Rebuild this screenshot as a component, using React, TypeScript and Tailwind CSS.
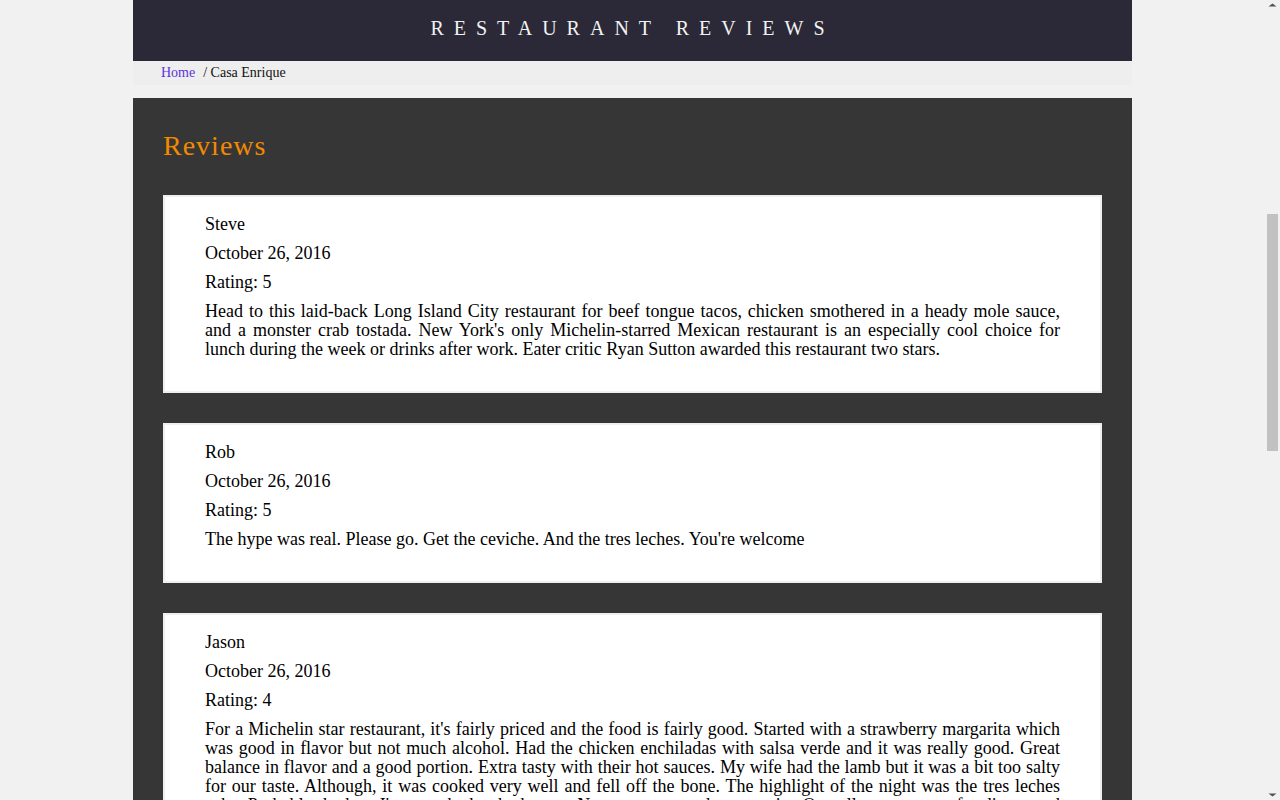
const reviews = [
  {
    name: "Steve",
    date: "October 26, 2016",
    rating: 5,
    comments:
      "Head to this laid-back Long Island City restaurant for beef tongue tacos, chicken smothered in a heady mole sauce, and a monster crab tostada. New York's only Michelin-starred Mexican restaurant is an especially cool choice for lunch during the week or drinks after work. Eater critic Ryan Sutton awarded this restaurant two stars.",
  },
  {
    name: "Rob",
    date: "October 26, 2016",
    rating: 5,
    comments:
      "The hype was real. Please go. Get the ceviche. And the tres leches. You're welcome",
  },
  {
    name: "Jason",
    date: "October 26, 2016",
    rating: 4,
    comments:
      "For a Michelin star restaurant, it's fairly priced and the food is fairly good. Started with a strawberry margarita which was good in flavor but not much alcohol. Had the chicken enchiladas with salsa verde and it was really good. Great balance in flavor and a good portion. Extra tasty with their hot sauces. My wife had the lamb but it was a bit too salty for our taste. Although, it was cooked very well and fell off the bone. The highlight of the night was the tres leches cake. Probably the best I've ever had to be honest. Not too sweet and very moist. Overall, a great spot for dinner and drinks with friends.",
  },
];

export default function App() {
  return (
    <div className="min-h-screen bg-[#f1f1f1] pr-[15px] font-['Liberation_Serif',serif] text-black">
      <div className="mx-auto w-[999px]">
        {/* Header */}
        <header className="flex h-[61px] items-center justify-center bg-[#2b2937] pb-[6px]">
          <h1 className="text-[20px] tracking-[10px] text-[#f2f2f2] uppercase">
            Restaurant Reviews
          </h1>
        </header>

        {/* Breadcrumb */}
        <nav className="flex h-[24px] items-center bg-[#eeeeee] pb-[2px] pl-[28px] text-[14px]">
          <a href="#" className="text-[#5b34d8]">
            Home
          </a>
          <span className="ml-[8px] text-[#111]">/ Casa Enrique</span>
        </nav>

        {/* Reviews */}
        <section className="mt-[13px] bg-[#363636] px-[30px] pt-[32px] pb-[40px]">
          <h2 className="mb-[33px] text-[28px] leading-[32px] tracking-[1px] text-[#f18a00]">
            Reviews
          </h2>
          <ul className="flex flex-col gap-[30px]">
            {reviews.map((r) => (
              <li
                key={r.name}
                className="border-2 border-[#efefef] bg-white px-[40px] pt-[18px] pb-[22px] text-[18px] leading-[19px]"
              >
                <p className="mb-[10px]">{r.name}</p>
                <p className="mb-[10px]">{r.date}</p>
                <p className="mb-[10px]">Rating: {r.rating}</p>
                <p className="mb-[10px] text-justify">{r.comments}</p>
              </li>
            ))}
          </ul>
        </section>

        <footer className="py-[25px] text-center text-[14px] tracking-[1px] text-[#444] uppercase">
          Copyright (c) 2017 Restaurant Reviews All Rights Reserved.
        </footer>
      </div>

      {/* Scrollbar */}
      <div className="fixed top-0 right-0 flex h-screen w-[15px] flex-col items-center bg-[#f1f1f1]">
        <svg width="15" height="15" viewBox="0 0 15 15" className="shrink-0">
          <path d="M3.5 6.5 L7.5 3.5 L11.5 6.5 Z" fill="#505050" />
        </svg>
        <div className="mt-[199px] h-[237px] w-[11px] bg-[#c1c1c1]" />
        <div className="flex-1" />
        <svg width="15" height="15" viewBox="0 0 15 15" className="shrink-0">
          <path d="M3.5 8.5 L7.5 11.5 L11.5 8.5 Z" fill="#505050" />
        </svg>
      </div>
    </div>
  );
}
